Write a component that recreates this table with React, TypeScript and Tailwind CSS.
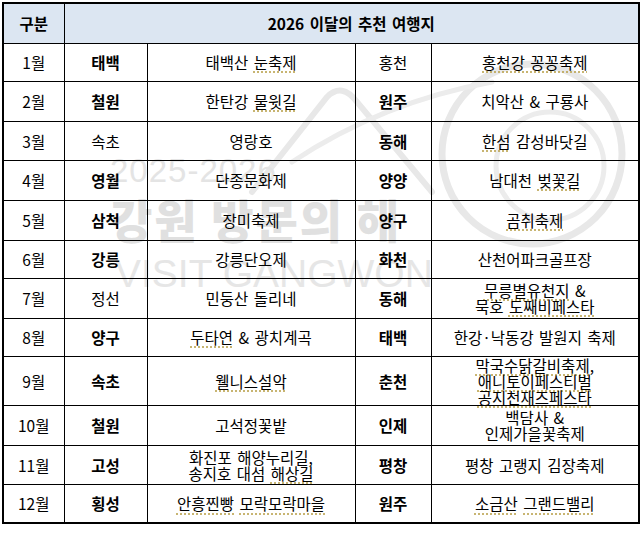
import type { ReactNode } from "react"

const U = ({ children }: { children: ReactNode }) => (
  <span className="underline decoration-dotted decoration-[#b8a04a] underline-offset-[3px]">{children}</span>
)

type Row = {
  month: string
  city1: string
  bold1: boolean
  place1: ReactNode
  city2: string
  bold2: boolean
  place2: ReactNode
  h: string
}

const rows: Row[] = [
  { month: "1월", city1: "태백", bold1: true, place1: <>태백산 <U>눈축제</U></>, city2: "홍천", bold2: false, place2: <U>홍천강 꽁꽁축제</U>, h: "h-[38px]" },
  { month: "2월", city1: "철원", bold1: true, place1: <>한탄강 <U>물윗길</U></>, city2: "원주", bold2: true, place2: "치악산 & 구룡사", h: "h-[40px]" },
  { month: "3월", city1: "속초", bold1: false, place1: "영랑호", city2: "동해", bold2: true, place2: <><U>한섬</U> 감성바닷길</>, h: "h-[39px]" },
  { month: "4월", city1: "영월", bold1: true, place1: "단종문화제", city2: "양양", bold2: true, place2: <>남대천 <U>벚꽃길</U></>, h: "h-[40px]" },
  { month: "5월", city1: "삼척", bold1: true, place1: "장미축제", city2: "양구", bold2: true, place2: <U>곰취축제</U>, h: "h-[40px]" },
  { month: "6월", city1: "강릉", bold1: true, place1: "강릉단오제", city2: "화천", bold2: true, place2: "산천어파크골프장", h: "h-[38px]" },
  {
    month: "7월", city1: "정선", bold1: false, place1: "민둥산 돌리네", city2: "동해", bold2: true,
    place2: <><U>무릉별유천지</U> &<br />묵호 <U>도째비페스타</U></>, h: "h-[40px]",
  },
  { month: "8월", city1: "양구", bold1: true, place1: <><U>두타연</U> & 광치계곡</>, city2: "태백", bold2: true, place2: "한강·낙동강 발원지 축제", h: "h-[38px]" },
  {
    month: "9월", city1: "속초", bold1: true, place1: <U>웰니스설악</U>, city2: "춘천", bold2: true,
    place2: <><U>막국수닭갈비축제,</U><br /><U>애니토이페스티벌</U><br /><U>공지천재즈페스타</U></>, h: "h-[45px]",
  },
  { month: "10월", city1: "철원", bold1: true, place1: "고석정꽃밭", city2: "인제", bold2: true, place2: <>백담사 &<br />인제가을꽃축제</>, h: "h-[40px]" },
  {
    month: "11월", city1: "고성", bold1: true, place1: <>화진포 해양누리길,<br />송지호 대섬 <U>해상길</U></>, city2: "평창", bold2: true,
    place2: "평창 고랭지 김장축제", h: "h-[39px]",
  },
  {
    month: "12월", city1: "횡성", bold1: true, place1: <><U>안흥찐빵</U> <U>모락모락마을</U></>, city2: "원주", bold2: true,
    place2: <><U>소금산</U> <U>그랜드밸리</U></>, h: "h-[39px]",
  },
]

const cell = "border border-black text-center align-middle p-0 leading-[16px] [word-spacing:2px]"

const Watermark = () => (
  <div className="absolute inset-0 pointer-events-none select-none">
    <svg className="absolute left-[230px] top-[40px]" width="400" height="230" viewBox="0 0 400 230" fill="none">
      <circle cx="300" cy="112" r="90" stroke="#e8e8e8" strokeWidth="7" />
      <circle cx="318" cy="124" r="54" stroke="#ececec" strokeWidth="5" />
      <path d="M20 150 L95 55 Q110 40 125 60 L200 150" stroke="#e8e8e8" strokeWidth="6" strokeLinecap="round" />
      <path d="M60 120 Q150 60 260 40" stroke="#ececec" strokeWidth="5" strokeLinecap="round" />
    </svg>
    <div className="absolute left-[108px] top-[152px] text-[33px] leading-none tracking-[1px] font-['Liberation_Sans',sans-serif] text-[#e4e4e4]">
      2025-2026
    </div>
    <div className="absolute left-[108px] top-[193px] text-[46px] leading-none font-black tracking-[2px] font-['Noto_Sans_CJK_KR',sans-serif] text-[#e0e0e0]">
      강원 방문의 해
    </div>
    <div className="absolute left-[113px] top-[252px] text-[39px] leading-none font-['Liberation_Sans',sans-serif] text-[#e6e6e6]">
      VISIT GANGWON
    </div>
  </div>
)

export default function App() {
  return (
    <div className="w-[640px] h-[533px] bg-white pl-[2px] pt-[2px] font-['Noto_Sans_CJK_KR','Noto_Sans',sans-serif] text-[15.5px] text-black">
      <div className="relative w-[636px]">
        <Watermark />
        <table className="relative w-[636px] table-fixed border-collapse border-2 border-black">
          <colgroup>
            <col className="w-[61px]" />
            <col className="w-[83px]" />
            <col className="w-[208px]" />
            <col className="w-[76px]" />
            <col className="w-[208px]" />
          </colgroup>
          <thead>
            <tr className="h-[40px] bg-[#dce6f2]">
              <th className={`${cell} font-bold`}>구분</th>
              <th colSpan={4} className={`${cell} font-bold`}>2026 이달의 추천 여행지</th>
            </tr>
          </thead>
          <tbody>
            {rows.map((r) => (
              <tr key={r.month} className={r.h}>
                <td className={cell}>{r.month}</td>
                <td className={`${cell} ${r.bold1 ? "font-bold" : "font-normal"}`}>{r.city1}</td>
                <td className={cell}>{r.place1}</td>
                <td className={`${cell} ${r.bold2 ? "font-bold" : "font-normal"}`}>{r.city2}</td>
                <td className={cell}>{r.place2}</td>
              </tr>
            ))}
          </tbody>
        </table>
      </div>
    </div>
  )
}
